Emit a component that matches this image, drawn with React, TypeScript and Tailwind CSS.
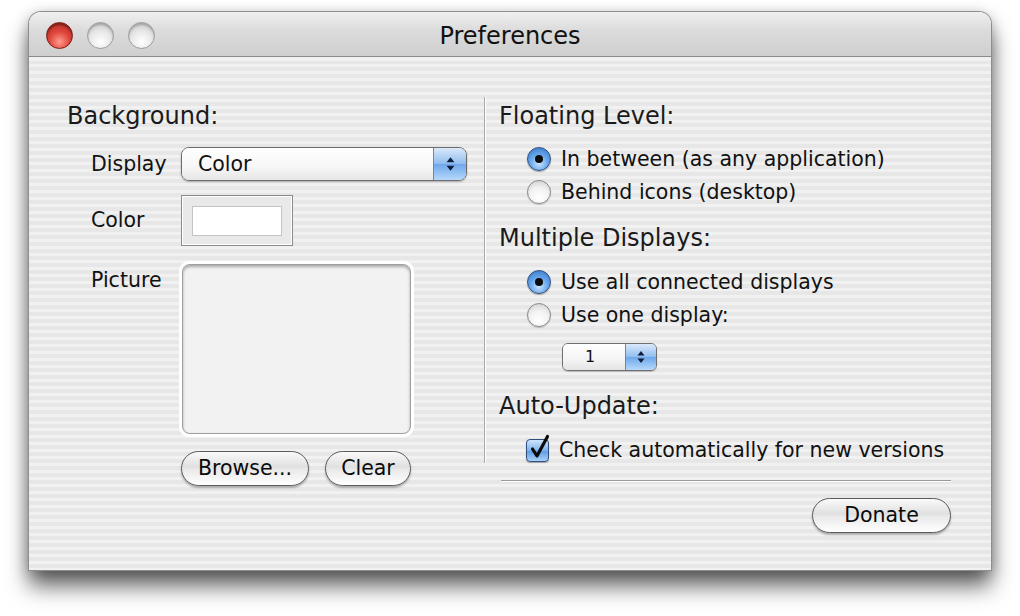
import React from "react";

const font = { fontFamily: '"DejaVu Sans", "Liberation Sans", sans-serif' };

function Light({ red }: { red?: boolean }) {
  return red ? (
    <span className="h-[27px] w-[27px] rounded-full border border-[#7a1a16] bg-[radial-gradient(circle_at_50%_75%,#ff9a8c_0%,#e0473c_45%,#a8231d_100%)] shadow-[inset_0_2px_2px_rgba(0,0,0,0.35)]" />
  ) : (
    <span className="h-[27px] w-[27px] rounded-full border border-[#9c9c9c] bg-[radial-gradient(circle_at_50%_75%,#ffffff_0%,#e6e6e6_50%,#bdbdbd_100%)] shadow-[inset_0_2px_2px_rgba(0,0,0,0.2)]" />
  );
}

function Arrows({ small }: { small?: boolean }) {
  const w = small ? 8 : 9;
  return (
    <svg width={w} height={small ? 14 : 16} viewBox="0 0 8 14">
      <path d="M4 1 L7.5 5.5 L0.5 5.5 Z" fill="#0d1f3c" />
      <path d="M4 13 L7.5 8.5 L0.5 8.5 Z" fill="#0d1f3c" />
    </svg>
  );
}

function Popup({ label, small }: { label: string; small?: boolean }) {
  return (
    <div
      className={
        small
          ? "flex h-[28px] w-[95px] overflow-hidden rounded-[6px] border border-[#707070] shadow-[0_1px_1px_rgba(0,0,0,0.2)]"
          : "flex h-[34px] w-[286px] overflow-hidden rounded-[8px] border border-[#6c6c6c] shadow-[0_1px_2px_rgba(0,0,0,0.25)]"
      }
    >
      <div
        className={
          small
            ? "flex flex-1 items-center bg-[linear-gradient(#ffffff,#f4f4f4_60%,#e4e4e4)] pl-[22px] text-[16px] text-[#111]"
            : "flex flex-1 items-center bg-[linear-gradient(#ffffff,#f6f6f6_60%,#e6e6e6)] pl-[16px] text-[20.5px] text-[#111]"
        }
      >
        {label}
      </div>
      <div
        className={
          small
            ? "flex w-[31px] items-center justify-center border-l border-[#6a86ad] bg-[linear-gradient(#dbe9fa,#8fbdf0_50%,#6ea8ea_51%,#b6d8fb)]"
            : "flex w-[33px] items-center justify-center border-l border-[#6a86ad] bg-[linear-gradient(#dbe9fa,#8fbdf0_50%,#6ea8ea_51%,#b6d8fb)]"
        }
      >
        <Arrows small={small} />
      </div>
    </div>
  );
}

function Button({ label, w }: { label: string; w: string }) {
  return (
    <div
      className={
        "flex h-[35px] items-center justify-center rounded-full border border-[#5a5a5a] bg-[linear-gradient(#fafafa,#e0e0e0_45%,#eaeaea_55%,#ffffff)] text-[20.5px] text-[#0a0a0a] shadow-[0_2px_2px_rgba(0,0,0,0.28)] " +
        w
      }
    >
      {label}
    </div>
  );
}

function Radio({ on, label }: { on?: boolean; label: string }) {
  return (
    <div className="flex h-[30px] items-center">
      <span className="ml-[28px] flex w-[34px] items-center">
        {on ? (
          <span className="flex h-[24px] w-[24px] items-center justify-center rounded-full border border-[#2f4f7f] bg-[radial-gradient(circle_at_50%_70%,#c9e4ff_0%,#6aa9ec_45%,#2f6fc4_100%)] shadow-[0_1px_1px_rgba(0,0,0,0.3)]">
            <span className="h-[8px] w-[8px] rounded-full bg-[#0b0b0b]" />
          </span>
        ) : (
          <span className="h-[24px] w-[24px] rounded-full border border-[#8a8a8a] bg-[radial-gradient(circle_at_50%_75%,#ffffff_0%,#f2f2f2_50%,#c8c8c8_100%)] shadow-[0_1px_1px_rgba(0,0,0,0.2)]" />
        )}
      </span>
      <span className="text-[20.5px] text-[#111]">{label}</span>
    </div>
  );
}

function Heading({ children, mt }: { children: React.ReactNode; mt: string }) {
  return <div className={"h-[28px] text-[24px] leading-[28px] text-[#1a1a1a] " + mt}>{children}</div>;
}

export default function App() {
  return (
    <div className="h-[616px] w-[1020px] bg-white pl-[29px] pt-[12px]" style={font}>
      <div className="w-[962px] rounded-t-[12px] shadow-[0_0_0_1px_#8e8e8e,0_16px_22px_rgba(0,0,0,0.62),0_2px_14px_rgba(0,0,0,0.25)]">
        {/* title bar */}
        <div className="relative flex h-[45px] items-center justify-center rounded-t-[12px] border-b border-[#8a8a8a] bg-[linear-gradient(#f0f0f0,#dcdcdc_40%,#cfcfcf)] pt-[4px]">
          <div className="absolute left-[17px] top-[10px] flex gap-[14px]">
            <Light red />
            <Light />
            <Light />
          </div>
          <span className="text-[24px] text-[#111]">Preferences</span>
        </div>

        {/* body */}
        <div className="flex h-[513px] bg-[repeating-linear-gradient(180deg,#f1f1f1_0px,#f1f1f1_3.5px,#e7e7e7_3.5px,#e7e7e7_7px)]">
          {/* left column */}
          <div className="w-[455px] pl-[38px] pt-[45px]">
            <Heading mt="">Background:</Heading>
            <div className="mt-[17px] flex h-[34px] items-center">
              <span className="ml-[24px] w-[90px] text-[20.5px] text-[#111]">Display</span>
              <Popup label="Color" />
            </div>
            <div className="mt-[14px] flex h-[51px] items-center">
              <span className="ml-[24px] w-[90px] text-[20.5px] text-[#111]">Color</span>
              <div className="flex h-[51px] w-[112px] items-center justify-center border border-[#8a8a8a] bg-[#e9e9e9] shadow-[inset_0_0_0_1px_#ffffff]">
                <div className="h-[30px] w-[90px] border border-[#c4c4c4] bg-white" />
              </div>
            </div>
            <div className="mt-[15px] flex h-[176px]">
              <span className="ml-[24px] w-[88px] pt-[4px] text-[20.5px] text-[#111]">Picture</span>
              <div className="h-[176px] w-[235px] rounded-[10px] border-[3px] border-white">
                <div className="h-full w-full rounded-[8px] border border-[#a0a0a0] bg-[#f2f2f2] shadow-[inset_0_2px_3px_rgba(0,0,0,0.3)]" />
              </div>
            </div>
            <div className="ml-[114px] mt-[14px] flex gap-[16px]">
              <Button label="Browse..." w="w-[128px]" />
              <Button label="Clear" w="w-[86px]" />
            </div>
          </div>

          {/* separator */}
          <div className="mt-[40px] h-[366px] w-px bg-[#a8a8a8] shadow-[1px_0_0_#ffffff]" />

          {/* right column */}
          <div className="flex w-[506px] flex-col pl-[14px] pr-[40px] pt-[45px]">
            <Heading mt="">Floating Level:</Heading>
            <div className="mt-[14px]">
              <Radio on label="In between (as any application)" />
            </div>
            <div className="mt-[3px]">
              <Radio label="Behind icons (desktop)" />
            </div>
            <Heading mt="mt-[17px]">Multiple Displays:</Heading>
            <div className="mt-[15px]">
              <Radio on label="Use all connected displays" />
            </div>
            <div className="mt-[3px]">
              <Radio label="Use one display:" />
            </div>
            <div className="ml-[63px] mt-[13px]">
              <Popup label="1" small />
            </div>
            <Heading mt="mt-[21px]">Auto-Update:</Heading>
            <div className="mt-[15px] flex h-[30px] items-center">
              <span className="relative ml-[27px] mr-[10px] h-[23px] w-[23px] rounded-[4px] border border-[#2f4f7f] bg-[linear-gradient(#cfe5fd,#7fb4ee_50%,#5b9ae4_51%,#a9d1fa)] shadow-[0_1px_1px_rgba(0,0,0,0.3)]">
                <svg className="absolute -top-[6px] left-[2px]" width="22" height="26" viewBox="0 0 22 26">
                  <path d="M3.5 15 L8 22 L18.5 2.5" fill="none" stroke="#0b0b0b" strokeWidth="3.2" strokeLinecap="round" strokeLinejoin="round" />
                </svg>
              </span>
              <span className="text-[20.5px] text-[#111]">Check automatically for new versions</span>
            </div>
            <div className="ml-[2px] mt-[15px] h-px bg-[#9a9a9a] shadow-[0_1px_0_#ffffff]" />
            <div className="mt-[17px] flex justify-end">
              <Button label="Donate" w="w-[139px]" />
            </div>
          </div>
        </div>
      </div>
    </div>
  );
}
